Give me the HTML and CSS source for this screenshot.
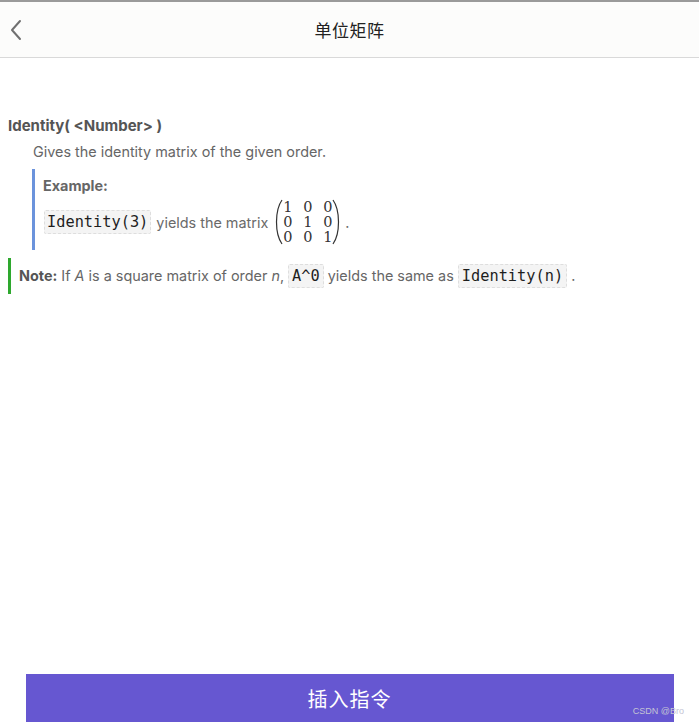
FILE: index.html
```html
<!DOCTYPE html>
<html>
<head>
<meta charset="utf-8">
<link rel="stylesheet" href="styles.css">
</head>
<body>
<div class="topline"></div>
<header class="nav">
  <svg class="back" width="14" height="22" viewBox="0 0 14 22"><path d="M11 2 L3 11 L11 20" fill="none" stroke="#707070" stroke-width="2" stroke-linecap="round" stroke-linejoin="round"/></svg>
  <div class="title">单位矩阵</div>
</header>
<main class="content">
  <div class="sig">Identity( &lt;Number&gt; )</div>
  <div class="desc">Gives the identity matrix of the given order.</div>
  <div class="example">
    <div class="ex-title">Example:</div>
    <div class="ex-line">
      <code class="code">Identity(3)</code>
      <span class="txt">yields the matrix</span>
      <span class="matrix">
        <svg class="paren" width="8" height="46" viewBox="0 0 8 46"><path d="M7 1 C2 8 1.5 16 1.5 23 C1.5 30 2 38 7 45" fill="none" stroke="#333" stroke-width="1.2"/></svg>
        <span class="cells">
          <span>1</span><span>0</span><span>0</span>
          <span>0</span><span>1</span><span>0</span>
          <span>0</span><span>0</span><span>1</span>
        </span>
        <svg class="paren" width="8" height="46" viewBox="0 0 8 46"><path d="M1 1 C6 8 6.5 16 6.5 23 C6.5 30 6 38 1 45" fill="none" stroke="#333" stroke-width="1.2"/></svg>
      </span>
      <span class="txt dot">.</span>
    </div>
  </div>
  <div class="note">
    <b>Note:</b> If <i>A</i> is a square matrix of order <i>n</i>, <code class="code sm">A^0</code> yields the same as <code class="code sm">Identity(n)</code> .
  </div>
</main>
<footer class="bottom">
  <button class="insert">插入指令</button>
  <span class="wm">CSDN @Bro</span>
</footer>
</body>
</html>
```
FILE: styles.css
```css
html, body {
  margin: 0;
  padding: 0;
  background: #ffffff;
  font-family: "Inter", "Liberation Sans", "Noto Sans CJK SC", sans-serif;
}
body {
  width: 699px;
  height: 725px;
  position: relative;
  overflow: hidden;
}
.topline {
  height: 2px;
  background: #9a9a9a;
}
.nav {
  height: 55px;
  background: #fcfcfb;
  border-bottom: 1px solid #d9d9d9;
  position: relative;
  display: flex;
  align-items: center;
  justify-content: center;
}
.back {
  position: absolute;
  left: 9px;
  top: 17px;
}
.title {
  font-family: "Noto Sans CJK SC", sans-serif;
  font-size: 17px;
  color: #222;
  letter-spacing: 0.5px;
}
.content {
  padding: 58px 0 0 0;
  color: #5e5e5e;
  font-size: 14.4px;
}
.sig {
  padding-left: 8px;
  font-weight: 700;
  font-size: 15px;
  color: #555;
  line-height: 20px;
}
.desc {
  padding-left: 33px;
  margin-top: 6px;
  color: #666;
  line-height: 20px;
}
.example {
  margin: 7px 0 0 32px;
  border-left: 3px solid #6b93dc;
  padding: 7px 0 5px 8px;
}
.ex-title {
  font-weight: 700;
  color: #666;
  line-height: 20px;
}
.ex-line {
  display: flex;
  align-items: center;
  margin-top: 3px;
}
.code {
  font-family: "DejaVu Sans Mono", "Liberation Mono", monospace;
  font-size: 15.3px;
  color: #1e1e1e;
  background: #f4f4f4;
  border: 1px dashed #dedede;
  border-radius: 2px;
  padding: 2px 2px;
}
.ex-line .code {
  margin-left: 1px;
}
.txt {
  color: #6a6a6a;
  margin-left: 5px;
}
.dot {
  margin-left: 5px;
}
.matrix {
  display: inline-flex;
  align-items: center;
  margin-left: 7px;
}
.cells {
  display: grid;
  grid-template-columns: repeat(3, 13px);
  column-gap: 7px;
  font-family: "DejaVu Serif", serif;
  font-size: 14.5px;
  line-height: 15px;
  color: #333;
  text-align: center;
  margin: 0 -2px;
}
.note {
  margin: 8px 0 0 8px;
  border-left: 3px solid #2ea82e;
  padding: 8px 0 8px 8px;
  line-height: 19px;
  color: #666;
}
.note b {
  color: #555;
}
.note i {
  color: #666;
}
.code.sm {
  padding: 2px 3px;
}
.bottom {
  position: absolute;
  left: 0;
  right: 0;
  bottom: 3px;
  display: flex;
  justify-content: center;
}
.insert {
  width: 648px;
  height: 48px;
  border: 0;
  background: #6657d1;
  color: #fff;
  font-family: "Noto Sans CJK SC", sans-serif;
  font-size: 20px;
  letter-spacing: 1px;
  padding: 0;
}
.wm {
  position: absolute;
  right: 15px;
  bottom: 6px;
  font-family: "Liberation Sans", sans-serif;
  font-size: 9px;
  color: #c4c4d4;
}
```
